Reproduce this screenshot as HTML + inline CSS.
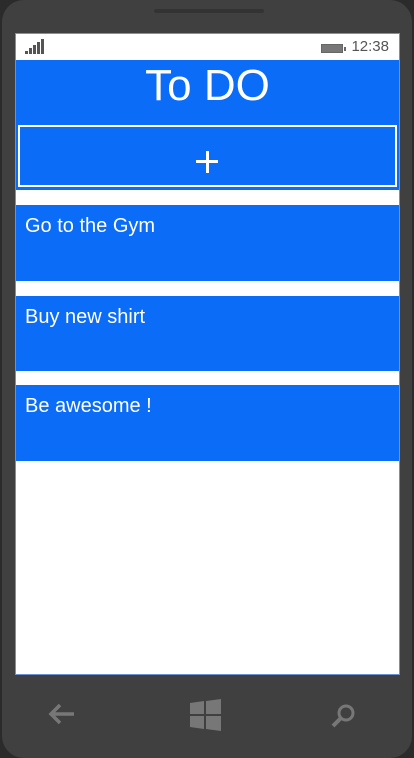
<!DOCTYPE html>
<html><head><meta charset="utf-8"><style>
*{margin:0;padding:0;box-sizing:border-box}
html,body{width:414px;height:758px;background:#2b2b2b;overflow:hidden;font-family:"Liberation Sans","DejaVu Sans",sans-serif}
.phone{position:absolute;left:2px;top:0;width:410px;height:758px;background:#404040;border-radius:22px}
.spk{position:absolute;left:152px;top:9px;width:110px;height:4px;border-radius:2px;background:#333}
.screen{position:absolute;left:15px;top:33px;width:385px;height:642px;background:#fff;border:1px solid #6d8fd6}
.status{position:absolute;left:0;top:0;width:100%;height:26px;background:#fff}
.time{position:absolute;right:10px;top:4px;font-size:15px;color:#555}
.bat{position:absolute;left:305px;top:10px;width:22px;height:9px;border:1px solid #666;background:#777}
.bat:after{content:"";position:absolute;right:-4px;top:2px;width:2px;height:4px;background:#666}
.sig span{position:absolute;bottom:6px;width:3px;background:#555}
.hdr{position:absolute;left:0;top:26px;width:100%;height:63px;background:#0b6cf8;color:#fff;text-align:center;font-size:44px;line-height:52px}
.btn{position:absolute;left:0;top:89px;width:100%;height:67px;background:#0b6cf8}
.btn div{position:absolute;left:2px;top:2px;right:2px;bottom:3px;border:2px solid #fff}
.btn div:before{content:"";position:absolute;left:176px;top:33px;width:22px;height:3px;background:#fff}
.btn div:after{content:"";position:absolute;left:185.5px;top:23.5px;width:3px;height:22px;background:#fff}
.item{position:absolute;left:0;width:100%;background:#0b6cf8;color:#fff;font-size:20px;padding:10px 0 0 9px}
.nav{position:absolute}
</style></head><body>
<div class="phone"><div class="spk"></div></div>
<div class="screen">
 <div class="status">
  <div class="sig"><span style="left:9px;height:3px"></span><span style="left:13px;height:6px"></span><span style="left:17px;height:9px"></span><span style="left:21px;height:12px"></span><span style="left:25px;height:15px"></span></div>
  <div class="bat"></div>
  <div class="time">12:38</div>
 </div>
 <div class="hdr">To DO</div>
 <div class="btn"><div></div></div>
 <div class="item" style="top:171px;height:76px">Go to the Gym</div>
 <div class="item" style="top:262px;height:75px">Buy new shirt</div>
 <div class="item" style="top:351px;height:76px">Be awesome !</div>
</div>
<svg class="nav" style="left:48px;top:700px" width="28" height="28" viewBox="0 0 28 28"><path d="M4 14H26M12 5L3 14L12 23" stroke="#777" stroke-width="3.5" fill="none"/></svg>
<svg class="nav" style="left:189px;top:698px" width="34" height="34" viewBox="0 0 34 34"><path d="M1 5L15 3V16H1ZM17 3L32 1V16H17ZM1 18H15V31L1 29ZM17 18H32V33L17 31Z" fill="#777"/></svg>
<svg class="nav" style="left:330px;top:703px" width="28" height="26" viewBox="0 0 28 26"><circle cx="16" cy="10" r="7" stroke="#777" stroke-width="3" fill="none"/><path d="M11 15L3 23" stroke="#777" stroke-width="4"/></svg>
</body></html>
